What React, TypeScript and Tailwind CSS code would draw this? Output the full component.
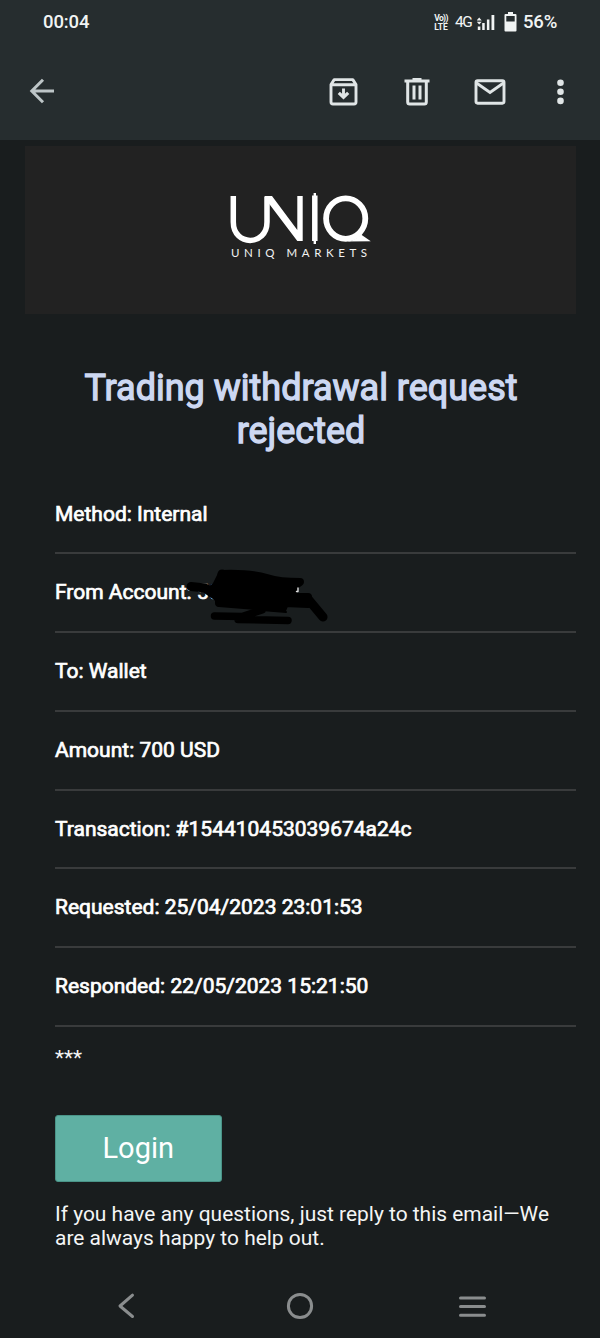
import type { ReactNode } from 'react';

const details = [
  { label: 'Method', value: 'Internal' },
  { label: 'From Account', value: '50', hidden: true },
  { label: 'To', value: 'Wallet' },
  { label: 'Amount', value: '700 USD' },
  { label: 'Transaction', value: '#154410453039674a24c' },
  { label: 'Requested', value: '25/04/2023 23:01:53' },
  { label: 'Responded', value: '22/05/2023 15:21:50' },
];

function StatusBar() {
  return (
    <div className="flex h-11 items-center pl-[43px] pr-[43px] pt-px text-[18.5px] font-medium text-[#f1f4f4]">
      <span className="tracking-[-0.1px]">00:04</span>
      <div className="ml-auto flex items-center">
        <div className="flex w-4 flex-col items-center text-[8.5px] font-bold">
          <span className="leading-[9px] tracking-[-0.6px]">Vo))</span>
          <span className="leading-[9px] tracking-[-0.1px]">LTE</span>
        </div>
        <span className="ml-[6px] w-[17px] text-[15.5px] font-normal leading-none tracking-[-1.5px]">4G</span>
        <svg className="ml-[5px]" width="18" height="18" viewBox="0 0 18 18" fill="currentColor">
          <path d="M2.2 3.5 4.7 6.4H-.3ZM2.2 10.6 4.7 7.7H-.3Z" />
          <rect x="0.8" y="12.5" width="2.6" height="3.5" />
          <rect x="5.2" y="9" width="2.5" height="7" />
          <rect x="9.9" y="5.5" width="2.5" height="10.5" />
          <rect x="14.5" y="1" width="2.8" height="15" />
        </svg>
        <svg className="-mt-px ml-[9px]" width="13" height="20" viewBox="0 0 13 20" fill="currentColor">
          <path
            fillRule="evenodd"
            d="M4 0H9V2H11.5Q12.5 2 12.5 3V18.5Q12.5 19.5 11.5 19.5H1.5Q.5 19.5 .5 18.5V3Q.5 2 1.5 2H4ZM2.3 4V9.5H10.7V4Z"
          />
        </svg>
        <span className="ml-[6px] w-[34px] whitespace-nowrap tracking-[-0.2px]">56%</span>
      </div>
    </div>
  );
}

function AppBar() {
  return (
    <div className="flex h-24 items-center pl-[29px] pr-[35px] text-[#e0e5e6]">
      {/* Back */}
      <svg className="-mt-[2px] text-[#bdc5c7]" width="26" height="26" viewBox="0 0 26 26" fill="none" stroke="currentColor" strokeWidth="3">
        <path d="M25 13H3M14 1.8 2.8 13 14 24.2" />
      </svg>

      {/* Archive */}
      <svg className="ml-auto" width="29" height="28" viewBox="0 0 29 28" fill="none" stroke="currentColor" strokeWidth="2.9">
        <path d="M2 6.5 5.2 1.6H23.8L27 6.5V24Q27 26 25 26H4Q2 26 2 24ZM2.5 6.8H26.5" strokeLinejoin="round" />
        <path d="M14.5 10.5V18.5" />
        <path d="M9.8 14.8 14.5 19.2 19.2 14.8" strokeWidth="3.2" />
      </svg>

      {/* Delete */}
      <svg className="ml-[46px]" width="26" height="28" viewBox="0 0 26 28" fill="none" stroke="currentColor" strokeWidth="3">
        <path d="M.5 3H25.5M8.5 1.5H17.5M3.7 3V24Q3.7 26 5.7 26H20.3Q22.3 26 22.3 24V3M10 7.5V21.5M16 7.5V21.5" />
      </svg>

      {/* Mark as unread */}
      <svg className="ml-[44px]" width="32" height="28" viewBox="0 0 32 28" fill="none" stroke="currentColor" strokeWidth="2.9">
        <rect x="2" y="2.8" width="28" height="22.4" rx="1.6" />
        <path d="M2.5 5 16 14.5 29.5 5" />
      </svg>

      {/* More */}
      <svg className="ml-[50px]" width="9" height="28" viewBox="0 0 9 28" fill="currentColor">
        <circle cx="4.5" cy="4.7" r="3.3" />
        <circle cx="4.5" cy="13.8" r="3.3" />
        <circle cx="4.5" cy="22.9" r="3.3" />
      </svg>
    </div>
  );
}

function Logo() {
  return (
    <svg width="144" height="72" viewBox="228 190 144 72" fill="none" stroke="#fff" strokeWidth="5.5" aria-label="UNIQ">
      <path d="M233.3 196V222C233.3 246.5 267 246.5 267 222V197" />
      <path d="M264.3 196H272L297.3 230V196H302.7V241H297.3L267 201Z" fill="#fff" stroke="none" />
      <path d="M314.8 195.5V241" />
      <path d="M314.8 193V244" strokeWidth="2.4" />
      <ellipse cx="345.7" cy="218.6" rx="19.6" ry="20.2" strokeWidth="5.8" />
      <path d="M345 241.6C351 241.6 357 239 361 234.5L370.8 241.3Z" fill="#fff" stroke="none" />
      <text
        x="231"
        y="257"
        fill="#f2f2f2"
        stroke="none"
        textLength="136"
        className="font-['Lato'] text-[11.5px]"
      >
        UNIQ MARKETS
      </text>
    </svg>
  );
}

function Scribble() {
  return (
    <svg
      className="absolute left-[130px] top-[12px]"
      width="146"
      height="60"
      viewBox="185 566 146 60"
      fill="none"
      stroke="#000"
      strokeLinecap="round"
      strokeLinejoin="round"
    >
      <path
        d="M222 574 Q250 573 267 578 Q280 582 300 582 L293 587 L293 597 L308 597 L308 604 L285 603 L283 608 L219 603 L219 599 L209 591 L216 586 Z"
        fill="#000"
        strokeWidth="8"
      />
      <path d="M191 586.5 205 588 212 593M222 574 226 584M308 599 323 617" strokeWidth="9" />
      <path d="M214.5 616 242 616.5 262 610M238 619.5 288 620.5" strokeWidth="7.5" />
      <path d="M262 610 283 608 286 612Z" fill="#000" strokeWidth="2" />
      <path d="M298 588V591.5H296.5" stroke="#ddd" strokeWidth="1.4" />
    </svg>
  );
}

function DetailRow({ children }: { children: ReactNode }) {
  return (
    <div className="relative flex h-[78.75px] items-center border-b-2 border-[#393b3c] pt-px text-[21px] text-white [-webkit-text-stroke:0.7px_currentColor]">
      {children}
    </div>
  );
}

function NavBar() {
  return (
    <div className="mt-auto flex h-[64px] items-center pl-[117px] pr-[113px] text-[#8a8d8e]">
      <svg width="18" height="26" viewBox="0 0 18 26" fill="none" stroke="currentColor" strokeWidth="3" strokeLinecap="round" strokeLinejoin="round">
        <path d="M15.5 2.2 3 13 15.5 23.5" />
      </svg>
      <svg className="ml-[151px]" width="28" height="28" viewBox="0 0 28 28" fill="none" stroke="currentColor" strokeWidth="3">
        <circle cx="14" cy="14" r="11.6" />
      </svg>
      <svg className="ml-auto" width="29" height="26" viewBox="0 0 29 26" fill="none" stroke="currentColor" strokeWidth="3" strokeLinecap="round">
        <path d="M2.5 5H26.5M2.5 13.6H26.5M2.5 22.2H26.5" />
      </svg>
    </div>
  );
}

export default function App() {
  return (
    <div className="flex h-[1338px] w-[600px] flex-col overflow-hidden bg-[#191d1e] font-['Roboto',sans-serif]">
      <header className="h-[140px] shrink-0 bg-[#262d2f]">
        <StatusBar />
        <AppBar />
      </header>

      {/* Email body */}
      <main className="pl-[25px] pr-6 pt-[6px]">
        <div className="flex h-[168px] justify-center bg-[#222222] pr-px pt-[44px]">
          <Logo />
        </div>

        <div className="pl-[30px]">
          <h1 className="-ml-[29px] mt-[53px] text-center text-[36px] leading-[42.5px] text-[#cdd8f2] [-webkit-text-stroke:1.3px_currentColor]">
            Trading withdrawal request
            <br />
            rejected
          </h1>

          <div className="mt-[23.5px]">
            {details.map((item) => (
              <DetailRow key={item.label}>
                {item.label}: {item.value}
                {item.hidden && <Scribble />}
              </DetailRow>
            ))}
          </div>

          <p className="mt-[19px] text-[21px] leading-6 text-[#f4f5f5]">***</p>

          <button className="mt-[45.5px] block h-[67px] w-[166.5px] rounded-[3px] border border-[#4a9488] bg-[#5fb0a3] text-[29px] text-white">
            Login
          </button>

          <p className="mt-[19.5px] whitespace-nowrap text-[20.95px] leading-[24.5px] text-[#f4f5f5]">
            If you have any questions, just reply to this email—We
            <br />
            are always happy to help out.
          </p>
        </div>
      </main>

      <NavBar />
    </div>
  );
}
